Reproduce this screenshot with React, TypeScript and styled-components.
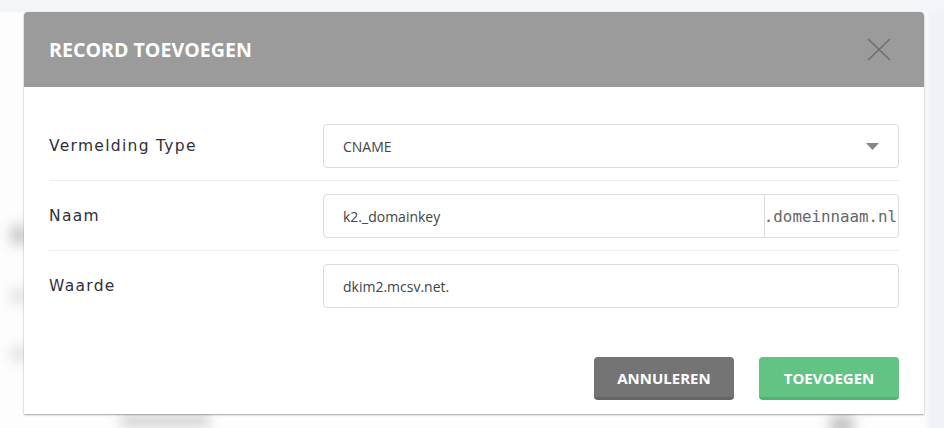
import React from "react";
import styled, { createGlobalStyle } from "styled-components";

const Global = createGlobalStyle`
  html, body { margin: 0; padding: 0; }
  body {
    background: #f4f5f9;
    font-family: "Open Sans", "Liberation Sans", sans-serif;
    overflow: hidden;
  }
`;

const Page = styled.div`
  position: relative;
  width: 944px;
  height: 428px;
  overflow: hidden;
  background: linear-gradient(to right, #fdfdfe 0, #fdfdfe 924px, #f1f2f7 930px);
`;

const TopStrip = styled.div`
  height: 12px;
  background: #f4f5f9;
`;

const Backdrop = styled.div`
  position: absolute;
  inset: 0;
  filter: blur(7px);
  pointer-events: none;
  display: flex;
  flex-direction: column;
  padding: 226px 0 0 12px;
  gap: 46px;
`;

const Blob = styled.div<{ $w: number; $h: number; $tone: string }>`
  width: ${(p) => p.$w}px;
  height: ${(p) => p.$h}px;
  background: ${(p) => p.$tone};
  border-radius: 4px;
`;

const BottomBlobs = styled.div`
  position: absolute;
  left: 0;
  right: 0;
  bottom: -6px;
  height: 18px;
  display: flex;
  gap: 620px;
  padding-left: 120px;
  filter: blur(6px);
  pointer-events: none;
`;

const Modal = styled.div`
  position: relative;
  z-index: 1;
  margin-left: 24px;
  width: 900px;
  height: 402px;
  background: #fff;
  border-radius: 4px 4px 0 0;
  box-shadow: 0 1px 2px rgba(0, 0, 0, 0.35), 0 0 1px rgba(0, 0, 0, 0.15);
  display: flex;
  flex-direction: column;
`;

const Header = styled.div`
  height: 75px;
  background: #9b9b9b;
  border-radius: 4px 4px 0 0;
  display: flex;
  align-items: center;
  justify-content: space-between;
  padding: 0 33px 0 25px;
`;

const Title = styled.h2`
  margin: 0;
  color: #fff;
  font-family: "Open Sans", sans-serif;
  font-weight: 700;
  font-size: 19.6px;
  letter-spacing: 0;
`;

const CloseButton = styled.button`
  border: 0;
  background: transparent;
  padding: 0;
  width: 24px;
  height: 24px;
  display: flex;
  align-items: center;
  justify-content: center;
  cursor: pointer;
`;

const Body = styled.div`
  padding: 24px 25px 0 25px;
`;

const Row = styled.div<{ $last?: boolean }>`
  display: grid;
  grid-template-columns: 274px 1fr;
  align-items: center;
  padding: 13px 0 12px;
  border-bottom: ${(p) => (p.$last ? "0" : "1px solid #ececec")};
`;

const Label = styled.label`
  font-family: "DejaVu Sans", sans-serif;
  font-size: 15.5px;
  letter-spacing: 1.3px;
  color: #30303c;
`;

const Field = styled.div`
  height: 44px;
  box-sizing: border-box;
  border: 1px solid #dcdcdc;
  border-radius: 4px;
  display: flex;
  align-items: stretch;
  overflow: hidden;
`;

const FieldText = styled.div`
  flex: 1;
  display: flex;
  align-items: center;
  padding: 0 19px;
  font-family: "Open Sans", sans-serif;
  font-size: 14px;
  color: #444;
`;

const Caret = styled.div`
  display: flex;
  align-items: center;
  padding-right: 19px;
`;

const Addon = styled.div`
  width: 133px;
  flex: none;
  border-left: 1px solid #dcdcdc;
  display: flex;
  align-items: center;
  justify-content: flex-end;
  overflow: hidden;
  white-space: nowrap;
  font-family: "DejaVu Sans Mono", "Liberation Mono", monospace;
  font-size: 15.8px;
  color: #666;
`;

const AddonText = styled.span`
  flex: none;
  padding-right: 1px;
`;

const Footer = styled.div`
  margin-top: auto;
  display: flex;
  justify-content: flex-end;
  gap: 25px;
  padding: 0 25px 14px;
`;

const Button = styled.button<{ $tone: "grey" | "green" }>`
  height: 43px;
  width: 140px;
  box-sizing: border-box;
  border: 0;
  border-bottom: 3px solid ${(p) => (p.$tone === "green" ? "#52b272" : "#656565")};
  border-radius: 4px;
  background: ${(p) => (p.$tone === "green" ? "#63c385" : "#747474")};
  color: #fff;
  font-family: "Open Sans", sans-serif;
  font-weight: 700;
  font-size: 15px;
  padding-top: 3px;
  cursor: pointer;
`;

const CloseIcon = () => (
  <svg width="24" height="23" viewBox="0 0 24 23" fill="none">
    <path d="M1 1 L23 22 M23 1 L1 22" stroke="#6e6e6e" strokeWidth="1.5" />
  </svg>
);

const CaretIcon = () => (
  <svg width="13" height="7" viewBox="0 0 13 7">
    <path d="M0 0 H13 L6.5 7 Z" fill="#878787" />
  </svg>
);

export default function App() {
  return (
    <>
      <Global />
      <Page>
        <Backdrop>
          <Blob $w={14} $h={18} $tone="#b8b8b8" />
          <Blob $w={14} $h={12} $tone="#d2d2d2" />
          <Blob $w={14} $h={12} $tone="#d2d2d2" />
        </Backdrop>
        <BottomBlobs>
          <Blob $w={90} $h={10} $tone="#cccccc" />
          <Blob $w={24} $h={18} $tone="#c4c4c4" />
        </BottomBlobs>
        <TopStrip />
        <Modal>
          <Header>
            <Title>RECORD TOEVOEGEN</Title>
            <CloseButton aria-label="Sluiten">
              <CloseIcon />
            </CloseButton>
          </Header>
          <Body>
            <Row>
              <Label>Vermelding Type</Label>
              <Field>
                <FieldText>CNAME</FieldText>
                <Caret>
                  <CaretIcon />
                </Caret>
              </Field>
            </Row>
            <Row>
              <Label>Naam</Label>
              <Field>
                <FieldText>k2._domainkey</FieldText>
                <Addon>
                  <AddonText>.domeinnaam.nl</AddonText>
                </Addon>
              </Field>
            </Row>
            <Row $last>
              <Label>Waarde</Label>
              <Field>
                <FieldText>dkim2.mcsv.net.</FieldText>
              </Field>
            </Row>
          </Body>
          <Footer>
            <Button $tone="grey">ANNULEREN</Button>
            <Button $tone="green">TOEVOEGEN</Button>
          </Footer>
        </Modal>
      </Page>
    </>
  );
}
